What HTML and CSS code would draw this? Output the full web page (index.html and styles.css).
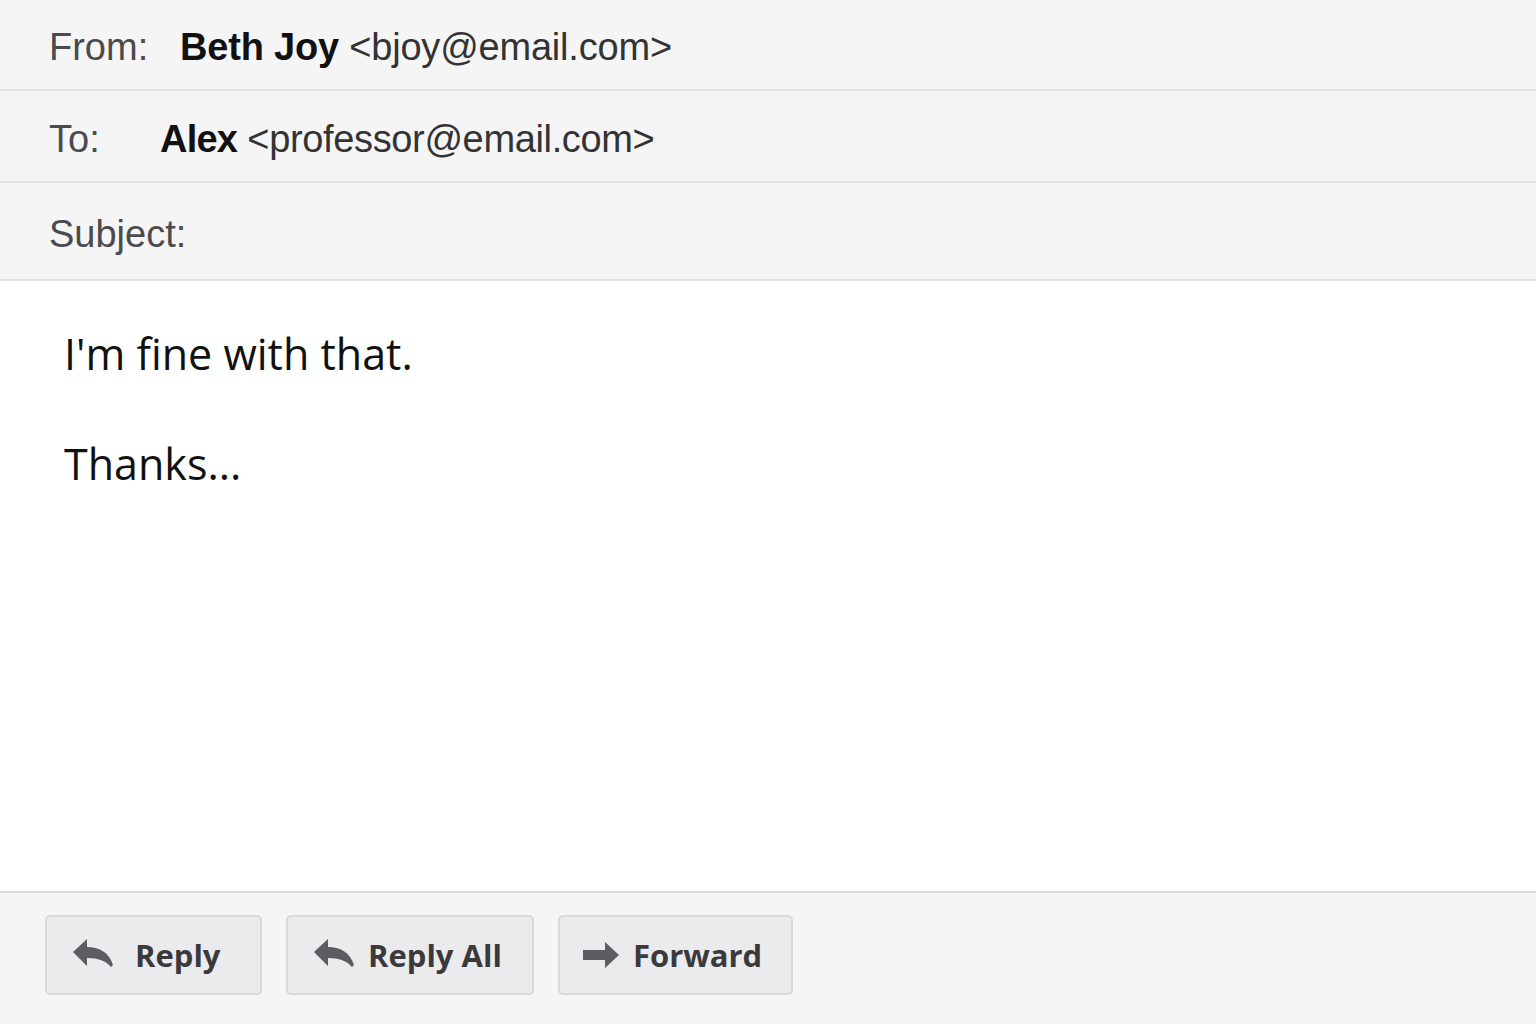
FILE: index.html
```html
<!DOCTYPE html>
<html>
<head>
<meta charset="utf-8">
<link rel="stylesheet" href="styles.css">
</head>
<body>
<div class="mail">
  <div class="headers">
    <div class="row row-from"><span class="label">From:</span><span class="value"><b>Beth Joy</b> &lt;bjoy@email.com&gt;</span></div>
    <div class="row row-to"><span class="label">To:</span><span class="value"><b>Alex</b> &lt;professor@email.com&gt;</span></div>
    <div class="row row-subject"><span class="label">Subject:</span></div>
  </div>
  <div class="body">
    <p>I'm fine with that.</p>
    <p>Thanks...</p>
  </div>
  <div class="footer">
    <button class="btn btn-reply">
      <svg class="icon" viewBox="0 0 40 32" width="40" height="32"><path d="M0 13 L14 0 L14 8 C26 8 36 13 40 26 L38 28 C33 22 25 19 14 19 L14 27 Z" fill="#5c5d61"/></svg>
      <span>Reply</span>
    </button>
    <button class="btn btn-replyall">
      <svg class="icon" viewBox="0 0 40 32" width="40" height="32"><path d="M0 13 L14 0 L14 8 C26 8 36 13 40 26 L38 28 C33 22 25 19 14 19 L14 27 Z" fill="#5c5d61"/></svg>
      <span>Reply All</span>
    </button>
    <button class="btn btn-forward">
      <svg class="icon" viewBox="0 0 36 28" width="36" height="28"><path d="M0 9 L22 9 L22 1 L36 14 L22 27 L22 19 L0 19 Z" fill="#5c5d61"/></svg>
      <span>Forward</span>
    </button>
  </div>
</div>
</body>
</html>
```
FILE: styles.css
```css
html, body {
  margin: 0;
  padding: 0;
}
body {
  width: 1536px;
  height: 1024px;
  overflow: hidden;
  background: #f6f6f7;
}
.mail {
  display: flex;
  flex-direction: column;
  height: 1024px;
}
.headers {
  background: #f5f5f6;
}
.row {
  display: flex;
  align-items: center;
  box-sizing: border-box;
  padding-left: 49px;
  padding-top: 6px;
  border-bottom: 2px solid #e3e3e5;
  font-family: "Liberation Sans", Arial, sans-serif;
  font-size: 38px;
  color: #1a1a1a;
}
.row-from { height: 91px; }
.row-to { height: 92px; }
.row-subject { height: 98px; }
.label {
  color: #4b4b4d;
}
.row-from .label { width: 131px; }
.row-to .label { width: 111px; }
.value b {
  font-weight: bold;
  color: #111;
}
.row-to .value b { letter-spacing: -0.8px; }
.value {
  color: #333335;
  letter-spacing: -0.2px;
}
.row-to .value { letter-spacing: -0.35px; }
.body {
  flex: 1;
  background: #ffffff;
  padding: 41px 64px 0;
  font-family: "Open Sans", "Noto Sans", sans-serif;
  font-size: 43px;
  color: #111;
  border-bottom: 2px solid #dcdcde;
}
.body p {
  margin: 0 0 46px;
  line-height: 64px;
}
.footer {
  height: 131px;
  box-sizing: border-box;
  padding-bottom: 8px;
  display: flex;
  align-items: center;
  gap: 24px;
  padding-left: 45px;
  background: #f5f5f6;
}
.btn {
  display: flex;
  align-items: center;
  height: 80px;
  box-sizing: border-box;
  border: 2px solid #d9d9dc;
  border-radius: 5px;
  background: #ebebed;
  font-family: "Open Sans", "Noto Sans", sans-serif;
  font-weight: bold;
  font-size: 31px;
  color: #3a3a3c;
  padding: 0 0 0 26px;
  gap: 22px;
}
.btn-reply { width: 217px; }
.btn-replyall { width: 248px; gap: 14px; }
.btn-forward { width: 235px; gap: 14px; padding-left: 23px; }
.btn .icon { flex: none; }
```
